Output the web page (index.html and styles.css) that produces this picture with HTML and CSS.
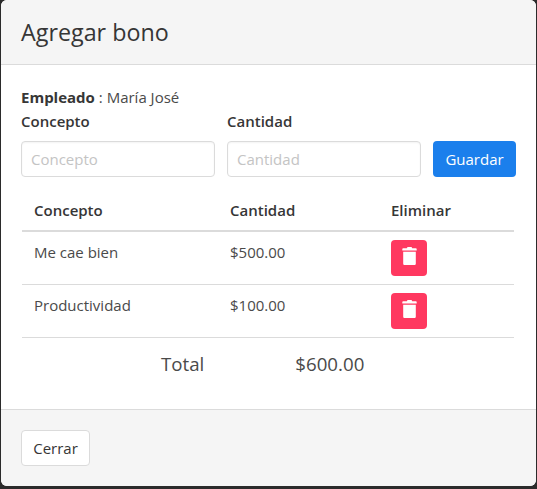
FILE: index.html
```html
<!DOCTYPE html>
<html lang="es">
<head>
    <meta charset="UTF-8">
    <title>Agregar bono</title>
    <link rel="stylesheet" href="styles.css">
</head>
<body>
    <div class="modal">
        <header class="modal-head">
            <p class="modal-title">Agregar bono</p>
        </header>
        <section class="modal-body">
            <p class="empleado"><strong>Empleado</strong> : María José</p>
            <form class="bono-form">
                <div class="field">
                    <label for="concepto">Concepto</label>
                    <input type="text" id="concepto" placeholder="Concepto">
                </div>
                <div class="field">
                    <label for="cantidad">Cantidad</label>
                    <input type="text" id="cantidad" placeholder="Cantidad">
                </div>
                <button type="button" class="btn btn-guardar">Guardar</button>
            </form>
            <table class="tabla">
                <thead>
                    <tr>
                        <th class="col-concepto">Concepto</th>
                        <th class="col-cantidad">Cantidad</th>
                        <th>Eliminar</th>
                    </tr>
                </thead>
                <tbody>
                    <tr>
                        <td>Me cae bien</td>
                        <td>$500.00</td>
                        <td>
                            <button type="button" class="btn-eliminar" aria-label="Eliminar">
                                <svg viewBox="0 0 16 20" width="15" height="18"><path d="M5 1.300C5.200.5 5.700 0 6.500 0h3c.8 0 1.300.5 1.500 1.300H15c.6 0 1 .4 1 1V4H0V2.300c0-.6.400-1 1-1zM1 5.200h14V18.500c0 .8-.7 1.500-1.500 1.500h-11C1.700 20 1 19.300 1 18.500z" fill="#fff"/></svg>
                            </button>
                        </td>
                    </tr>
                    <tr>
                        <td>Productividad</td>
                        <td>$100.00</td>
                        <td>
                            <button type="button" class="btn-eliminar" aria-label="Eliminar">
                                <svg viewBox="0 0 16 20" width="15" height="18"><path d="M5 1.300C5.200.5 5.700 0 6.500 0h3c.8 0 1.300.5 1.500 1.300H15c.6 0 1 .4 1 1V4H0V2.300c0-.6.400-1 1-1zM1 5.200h14V18.500c0 .8-.7 1.500-1.500 1.500h-11C1.700 20 1 19.300 1 18.500z" fill="#fff"/></svg>
                            </button>
                        </td>
                    </tr>
                </tbody>
            </table>
            <div class="total">
                <span>Total</span>
                <span>$600.00</span>
            </div>
        </section>
        <footer class="modal-foot">
            <button type="button" class="btn btn-cerrar">Cerrar</button>
        </footer>
    </div>
</body>
</html>
```

FILE: styles.css
```css
body {
    margin: 0;
    height: 489px;
    overflow: hidden;
    background-color: #2b2b2b;
    color: #4a4a4a;
    font-family: "Open Sans", "Noto Sans", sans-serif;
    font-size: 15px;
    line-height: 24px;
}

.modal {
    width: 535px;
    height: 486px;
    margin-left: 1px;
    display: flex;
    flex-direction: column;
    background-color: #fff;
    border-radius: 6px;
    overflow: hidden;
}

.modal-head {
    flex: none;
    height: 64px;
    padding: 0 20px;
    display: flex;
    align-items: center;
    background-color: #f5f5f5;
    border-bottom: 1px solid #dbdbdb;
}

.modal-title {
    margin: 0;
    font-size: 23.300px;
    color: #363636;
}

.modal-body {
    flex: none;
    height: 324px;
    padding: 20px 20px 0;
}

.empleado {
    margin: 0;
    height: 24px;
}

.empleado strong {
    color: #363636;
}

.bono-form {
    display: flex;
    align-items: flex-end;
    gap: 12px;
}

.field {
    width: 194px;
    display: flex;
    flex-direction: column;
    gap: 8px;
}

.field label {
    font-weight: 600;
    color: #363636;
}

.field input {
    box-sizing: border-box;
    height: 36px;
    padding: 0 9px;
    border: 1px solid #dbdbdb;
    border-radius: 4px;
    font: inherit;
    color: #363636;
    box-shadow: inset 0 1px 2px rgba(10, 10, 10, 0.05);
}

.field input::placeholder {
    color: #c4c4c4;
}

.btn {
    box-sizing: border-box;
    height: 36px;
    border-radius: 4px;
    font: inherit;
    cursor: pointer;
}

.btn-guardar {
    width: 83px;
    border: none;
    background-color: #1b7fec;
    color: #fff;
}

.btn-cerrar {
    width: 69px;
    border: 1px solid #dbdbdb;
    background-color: #fff;
    color: #363636;
}

.tabla {
    width: 492px;
    margin: 13px 0 0 1px;
    border-collapse: collapse;
    table-layout: fixed;
    text-align: left;
}

.tabla th {
    padding: 8px 12px;
    font-weight: 600;
    color: #363636;
    border-bottom: 2px solid #dbdbdb;
}

.tabla td {
    padding: 8px 12px;
    vertical-align: top;
    border-bottom: 1px solid #dbdbdb;
}

.col-concepto {
    width: 172px;
}

.col-cantidad {
    width: 137px;
}

.btn-eliminar {
    width: 36px;
    height: 36px;
    padding: 0 0 4px;
    display: flex;
    align-items: center;
    justify-content: center;
    border: none;
    border-radius: 4px;
    background-color: #ff3860;
    cursor: pointer;
}

.total {
    display: flex;
    gap: 91px;
    padding: 14px 0 0 140px;
    font-size: 18.700px;
}

.modal-foot {
    flex: 1;
    padding: 20px;
    background-color: #f5f5f5;
    border-top: 1px solid #dbdbdb;
}
```
